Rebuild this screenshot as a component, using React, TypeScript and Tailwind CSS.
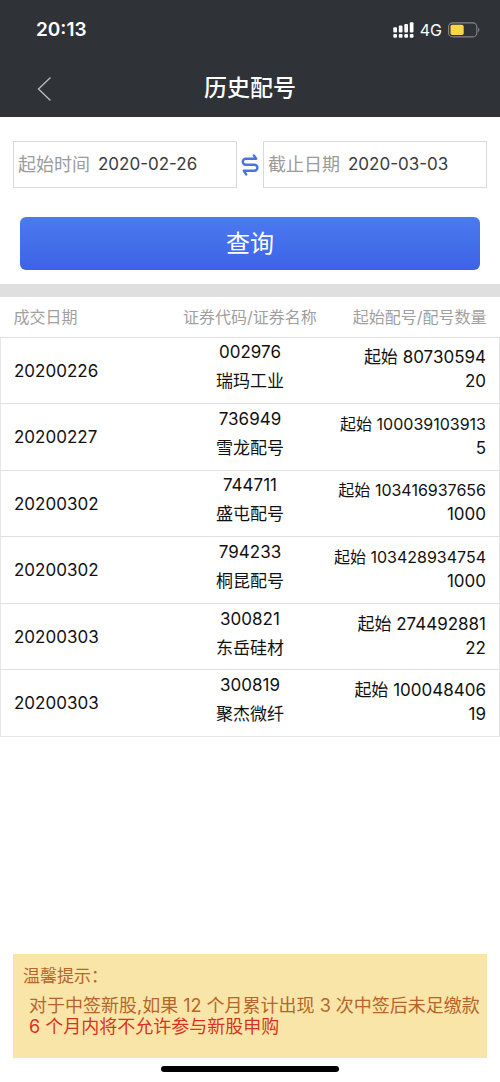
import { useState } from "react"

const records = [
  { id: 1, date: "20200226", code: "002976", name: "瑞玛工业", start: "80730594", count: "20" },
  { id: 2, date: "20200227", code: "736949", name: "雪龙配号", start: "100039103913", count: "5" },
  { id: 3, date: "20200302", code: "744711", name: "盛屯配号", start: "103416937656", count: "1000" },
  { id: 4, date: "20200302", code: "794233", name: "桐昆配号", start: "103428934754", count: "1000" },
  { id: 5, date: "20200303", code: "300821", name: "东岳硅材", start: "274492881", count: "22" },
  { id: 6, date: "20200303", code: "300819", name: "聚杰微纤", start: "100048406", count: "19" },
]

// Dual SIM signal: four rising bars over a row of dots
function SignalIcon() {
  return (
    <svg className="w-[21px] h-4" viewBox="0 0 21 16" fill="white" aria-hidden="true">
      <rect x="0.3" y="5.2" width="3.7" height="5.4" rx="1" />
      <rect x="5.8" y="3.6" width="3.7" height="7" rx="1" />
      <rect x="11.3" y="2" width="3.7" height="8.6" rx="1" />
      <rect x="16.8" y="0.2" width="3.7" height="10.4" rx="1" />
      <rect x="0.3" y="12" width="3.7" height="3.7" rx="1" />
      <rect x="5.8" y="12" width="3.7" height="3.7" rx="1" />
      <rect x="11.3" y="12" width="3.7" height="3.7" rx="1" />
      <rect x="16.8" y="12" width="3.7" height="3.7" rx="1" />
    </svg>
  )
}

function BatteryIcon() {
  return (
    <svg className="w-8 h-4" viewBox="0 0 32 16" fill="none" aria-hidden="true">
      <rect x="0.6" y="0.9" width="28.2" height="14" rx="4" stroke="#85868a" strokeWidth="1.1" />
      <rect x="2.5" y="2.8" width="13.2" height="10.2" rx="1.8" fill="#fad648" />
      <path d="M30.2 5.6c1.6.8 1.6 3.8 0 4.6z" fill="#85868a" />
    </svg>
  )
}

function SwapIcon() {
  return (
    <svg
      className="w-[18px] h-[22px]"
      viewBox="0 0 18 22"
      fill="none"
      stroke="#4874dc"
      strokeWidth="2.4"
      strokeLinecap="round"
      strokeLinejoin="round"
      aria-hidden="true"
    >
      <path d="M12.8 1.4 15.2 4.8H4.8a3 3 0 0 0 0 6h8.6a3 3 0 0 1 0 6H2.8l2.4 3.6" />
    </svg>
  )
}

type DateFieldProps = {
  id: string
  label: string
  value: string
  onChange: (value: string) => void
}

function DateField({ id, label, value, onChange }: DateFieldProps) {
  return (
    <div className="flex flex-1 min-w-0 items-center h-[47px] pl-1 border border-[#d9d9d9]">
      <label htmlFor={id} className="shrink-0 text-lg text-[#9b9b9b]">
        {label}
      </label>
      <input
        id={id}
        type="text"
        value={value}
        onChange={(e) => onChange(e.target.value)}
        className="flex-1 min-w-0 ml-2 text-[17px] text-[#3c3c3c] bg-transparent outline-none"
      />
    </div>
  )
}

export default function App() {
  const [from, setFrom] = useState("2020-02-26")
  const [to, setTo] = useState("2020-03-03")

  const swap = () => {
    setFrom(to)
    setTo(from)
  }

  return (
    <div
      lang="zh-CN"
      className="flex flex-col min-h-screen bg-white text-[17px] text-[#111] font-['Inter','Noto_Sans_CJK_SC',sans-serif]"
    >
      <header className="bg-[#2f3236] text-white">
        {/* Status bar */}
        <div className="flex items-center justify-between h-[60px] pl-9 pr-5">
          <time className="text-[19px] font-semibold">20:13</time>
          <div className="flex items-center">
            <SignalIcon />
            <span className="mx-1.5 text-base">4G</span>
            <BatteryIcon />
          </div>
        </div>

        {/* Nav bar */}
        <div className="grid grid-cols-[64px_1fr_64px] items-center h-[57px]">
          <button type="button" aria-label="返回" className="flex items-center h-full pl-[37px]">
            <svg className="w-[15px] h-[26px]" viewBox="0 0 15 26" fill="none" aria-hidden="true">
              <path d="M13.5 1.5 1.5 13l12 11.5" stroke="#b4b8bf" strokeWidth="1.4" />
            </svg>
          </button>
          <h1 className="text-center text-[23px] font-medium">历史配号</h1>
        </div>
      </header>

      <form onSubmit={(e) => e.preventDefault()}>
        <div className="flex items-center px-[13px] pt-6">
          <DateField id="from" label="起始时间" value={from} onChange={setFrom} />
          <button type="button" aria-label="交换日期" onClick={swap} className="flex justify-center w-[26px]">
            <SwapIcon />
          </button>
          <DateField id="to" label="截止日期" value={to} onChange={setTo} />
        </div>
        <div className="px-5 pt-[29px] pb-3.5">
          <button
            type="submit"
            className="w-full h-[53px] rounded-md bg-linear-to-b from-[#4b7aee] to-[#3d63e6] text-2xl text-white"
          >
            查询
          </button>
        </div>
      </form>

      <div className="h-[13px] bg-[#dfdfdf]" />

      <table className="w-full h-[440px] table-fixed border-collapse">
        <thead>
          <tr className="h-10 text-base text-[#a0a0a0]">
            <th className="pl-[13px] text-left font-normal">成交日期</th>
            <th className="text-center font-normal whitespace-nowrap">证券代码/证券名称</th>
            <th className="pr-[13px] text-right font-normal whitespace-nowrap">起始配号/配号数量</th>
          </tr>
        </thead>
        <tbody className="border border-[#e6e6e6]">
          {records.map((r) => (
            <tr key={r.id} className="border-t border-[#e0e0e0]">
              <td className="pt-0.5 pl-[13px]">{r.date}</td>
              <td className="pb-1.5 text-center leading-[29px]">
                <div>{r.code}</div>
                <div>{r.name}</div>
              </td>
              <td className="pr-[13px] pb-0.5 text-right leading-6">
                {/* Twelve digit numbers drop a size to stay on one line */}
                <div className={r.start.length > 10 ? "text-base leading-6 whitespace-nowrap" : "whitespace-nowrap"}>
                  起始 {r.start}
                </div>
                <div>{r.count}</div>
              </td>
            </tr>
          ))}
        </tbody>
      </table>

      <footer className="mt-auto px-[13px] pb-[10px]">
        <section className="px-2.5 pt-2.5 pb-[21px] bg-[#fae5a8] text-[#b5652b]">
          <h2 className="leading-6">温馨提示：</h2>
          <p className="pt-[7px] pl-1.5 text-lg leading-[21px] whitespace-nowrap">
            对于中签新股,如果 12 个月累计出现 3 次中签后未足缴款
          </p>
          <p className="pl-1.5 text-lg leading-[21px] text-[#d8341f]">6 个月内将不允许参与新股申购</p>
        </section>
        <div className="mx-auto mt-2 w-[178px] h-1.5 rounded-full bg-black" />
      </footer>
    </div>
  )
}
